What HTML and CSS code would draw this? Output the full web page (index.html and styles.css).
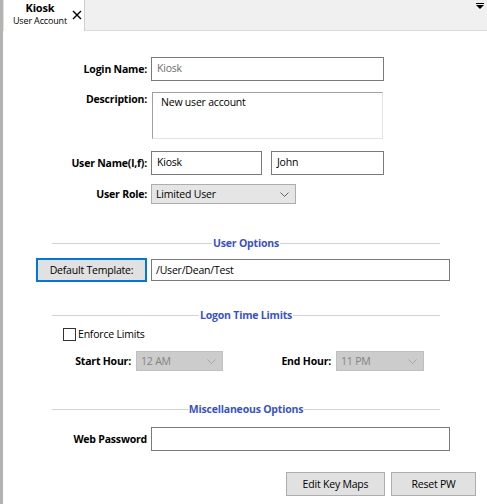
FILE: index.html
```html
<!DOCTYPE html>
<html>
<head>
<meta charset="utf-8">
<link rel="stylesheet" href="styles.css">
</head>
<body>
<div class="window">
  <div class="strip"></div>
  <div class="main">
    <div class="tabbar">
      <div class="tab">
        <div class="tab-text">
          <div class="tab-title">Kiosk</div>
          <div class="tab-sub">User Account</div>
        </div>
        <svg class="tab-close" width="10" height="10" viewBox="0 0 10 10"><path d="M1 1 L9 9 M9 1 L1 9" stroke="#000" stroke-width="1.4" fill="none"/></svg>
      </div>
      <svg class="tab-menu" width="8" height="6" viewBox="0 0 8 6"><rect x="0" y="0" width="8" height="1" fill="#000"/><path d="M0 2 H8 L4 6 Z" fill="#000"/></svg>
    </div>
    <div class="content">
      <div class="row r-login">
        <label class="lbl">Login Name:</label>
        <div class="field f-login muted">Kiosk</div>
      </div>
      <div class="row r-desc">
        <label class="lbl lbl-top">Description:</label>
        <div class="field f-desc">New user account</div>
      </div>
      <div class="row r-name">
        <label class="lbl">User Name(l,f):</label>
        <div class="field f-last">Kiosk</div>
        <div class="field f-first">John</div>
      </div>
      <div class="row r-role">
        <label class="lbl">User Role:</label>
        <div class="select s-role"><span>Limited User</span><svg width="9" height="5" viewBox="0 0 9 5"><path d="M0.5 0.5 L4.5 4.5 L8.5 0.5" stroke="#606060" fill="none"/></svg></div>
      </div>

      <div class="divider d-user"><span>User Options</span></div>
      <div class="row r-tpl">
        <button class="btn btn-default">Default Template:</button>
        <div class="field f-tpl">/User/Dean/Test</div>
      </div>

      <div class="divider d-logon"><span>Logon Time Limits</span></div>
      <div class="row r-check">
        <span class="checkbox"></span>
        <span class="check-label">Enforce Limits</span>
      </div>
      <div class="row r-hours">
        <label class="lbl lbl-start">Start Hour:</label>
        <div class="select disabled s-start"><span>12 AM</span><svg width="9" height="5" viewBox="0 0 9 5"><path d="M0.5 0.5 L4.5 4.5 L8.5 0.5" stroke="#a8a8a8" fill="none"/></svg></div>
        <label class="lbl lbl-end">End Hour:</label>
        <div class="select disabled s-end"><span>11 PM</span><svg width="9" height="5" viewBox="0 0 9 5"><path d="M0.5 0.5 L4.5 4.5 L8.5 0.5" stroke="#a8a8a8" fill="none"/></svg></div>
      </div>

      <div class="divider d-misc"><span>Miscellaneous Options</span></div>
      <div class="row r-web">
        <label class="lbl">Web Password</label>
        <div class="field f-web"></div>
      </div>
      <div class="row r-buttons">
        <button class="btn b-keys">Edit Key Maps</button>
        <button class="btn b-reset">Reset PW</button>
      </div>
    </div>
  </div>
</div>
</body>
</html>
```
FILE: styles.css
```css
* { box-sizing: border-box; }
html, body {
  margin: 0;
  padding: 0;
  background: #ffffff;
}
body {
  font-family: "Open Sans", "Noto Sans", sans-serif;
  font-size: 10.5px;
  letter-spacing: -0.2px;
  color: #000;
  width: 487px;
  height: 504px;
  overflow: hidden;
}
.window {
  display: flex;
  height: 504px;
}
.strip {
  width: 3px;
  flex: none;
  background: #b3b3b3;
}
.main {
  flex: 1;
  display: flex;
  flex-direction: column;
}
.tabbar {
  height: 31px;
  background: #f0f0f0;
  border-bottom: 1px solid #dadada;
  display: flex;
  align-items: flex-start;
  justify-content: space-between;
}
.tab {
  width: 82px;
  height: 31px;
  background: #ffffff;
  border-right: 1px solid #cfcfcf;
  border-left: 1px solid #e0e0e0;
  display: flex;
  align-items: flex-start;
  padding-left: 6px;
}
.tab-text {
  width: 60px;
  flex: none;
  display: flex;
  flex-direction: column;
  align-items: center;
  white-space: nowrap;
  padding-top: 1px;
}
.tab-title {
  font-weight: bold;
  font-size: 11px;
  line-height: 13px;
}
.tab-sub {
  font-size: 9px;
  letter-spacing: -0.15px;
  line-height: 13px;
}
.tab-close {
  flex: none;
  margin-left: 2px;
  margin-top: 10px;
}
.tab-menu {
  margin-top: 3px;
  margin-right: 3px;
}
.content {
  display: flex;
  flex-direction: column;
}
.row {
  display: flex;
  align-items: center;
}
.lbl {
  width: 144px;
  text-align: right;
  font-weight: bold;
  margin-right: 4px;
  flex: none;
}
.lbl-top { align-self: flex-start; margin-top: 0; }
.field {
  border: 1px solid #7a7a7a;
  background: #fff;
  height: 24px;
  padding: 1px 5px;
  line-height: 18px;
}
.muted { color: #6d6d6d; }
.r-login { margin-top: 26px; }
.f-login { width: 233px; }
.r-desc { margin-top: 11px; }
.f-desc {
  width: 231px;
  height: 47px;
  margin-left: 1px;
  border-color: #a0a0a0 #e3e3e3 #e3e3e3 #a0a0a0;
  padding: 0 8px;
}
.r-name { margin-top: 12px; }
.f-last { width: 111px; }
.f-first { width: 113px; margin-left: 9px; }
.r-role { margin-top: 9px; }
.select {
  height: 20px;
  border: 1px solid #adadad;
  background: #e5e5e5;
  display: flex;
  align-items: center;
  justify-content: space-between;
  padding: 0 6px 0 4px;
}
.s-role { width: 145px; }
.select.disabled {
  background: #cccccc;
  border-color: #bfbfbf;
  color: #838383;
}
.divider {
  display: flex;
  align-items: center;
  margin-left: 49px;
  width: 388px;
  height: 14px;
  color: #3b52c4;
  font-weight: bold;
}
.divider::before, .divider::after {
  content: "";
  flex: 1;
  height: 1px;
  background: #d2d2d2;
}
.divider span { padding: 0 1px; line-height: 14px; }
.d-user { margin-top: 32px; }
.r-tpl { margin-top: 8px; }
.btn {
  font-family: inherit;
  font-size: 10.5px;
  letter-spacing: -0.2px;
  color: #000;
  background: #e1e1e1;
  border: 1px solid #adadad;
  height: 24px;
  padding: 0;
  margin: 0;
}
.btn-default {
  margin-left: 33px;
  width: 111px;
  border: 2px solid #0078d7;
  margin-right: 4px;
}
.f-tpl { width: 299px; height: 22px; line-height: 18px; padding: 1px 4px; }
.d-logon { margin-top: 26px; }
.r-check { margin-top: 5px; height: 14px; }
.checkbox {
  width: 13px;
  height: 13px;
  border: 1px solid #333;
  background: #fff;
  margin-left: 60px;
  margin-right: 2px;
}
.r-hours { margin-top: 10px; }
.lbl-start { width: 128px; margin-right: 5px; }
.s-start { width: 87px; }
.lbl-end { width: 108px; margin-right: 5px; }
.s-end { width: 88px; }
.d-misc { margin-top: 31px; }
.r-web { margin-top: 11px; }
.f-web { width: 299px; }
.r-buttons {
  margin-top: 21px;
  justify-content: flex-end;
  margin-right: 11px;
  gap: 6px;
}
.b-keys { width: 99px; }
.b-reset { width: 85px; }
```
